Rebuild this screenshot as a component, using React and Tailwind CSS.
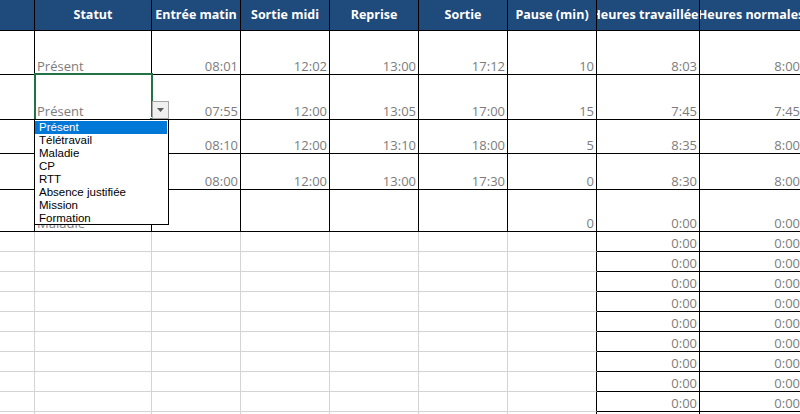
import React from 'react';

const widths = ['w-[35px]', 'w-[117px]', 'w-[89px]', 'w-[89px]', 'w-[89px]', 'w-[89px]', 'w-[89px]', 'w-[103px]', 'w-[103px]'];

const headers = ['', 'Statut', 'Entrée matin', 'Sortie midi', 'Reprise', 'Sortie', 'Pause (min)', 'Heures travaillées', 'Heures normales'];

const rows = [
  { h: 'h-[44px]', cells: ['', 'Présent', '08:01', '12:02', '13:00', '17:12', '10', '8:03', '8:00'] },
  { h: 'h-[45px]', cells: ['', 'Présent', '07:55', '12:00', '13:05', '17:00', '15', '7:45', '7:45'] },
  { h: 'h-[34px]', cells: ['', 'Télétravail', '08:10', '12:00', '13:10', '18:00', '5', '8:35', '8:00'] },
  { h: 'h-[36px]', cells: ['', 'Présent', '08:00', '12:00', '13:00', '17:30', '0', '8:30', '8:00'] },
  { h: 'h-[42px]', cells: ['', 'Maladie', '', '', '', '', '0', '0:00', '0:00'] },
];

const options = ['Présent', 'Télétravail', 'Maladie', 'CP', 'RTT', 'Absence justifiée', 'Mission', 'Formation'];

const dataFont = { fontFamily: '"Open Sans", "Liberation Sans", sans-serif' };

function Cell({ width, border, text, left }) {
  return (
    <div
      className={`${width} ${border} shrink-0 h-full flex items-end overflow-hidden whitespace-nowrap text-[13px] leading-[16px] text-[#7c7c7c] ${
        left ? 'justify-start pl-[2px]' : 'justify-end pr-[2px]'
      }`}
    >
      {text}
    </div>
  );
}

function App() {
  return (
    <div className="relative w-[800px] h-[414px] overflow-hidden bg-white" style={dataFont}>
      {/* header */}
      <div className="flex h-[31px]">
        {headers.map((title, i) => (
          <div
            key={i}
            className={`${widths[i]} shrink-0 h-full bg-[#1f4a7c] border-r border-b border-black flex items-center justify-center overflow-hidden whitespace-nowrap text-white font-bold text-[12.5px]`}
          >
            {title}
          </div>
        ))}
      </div>

      {/* filled rows */}
      {rows.map((row, r) => (
        <div key={r} className={`flex ${row.h}`}>
          {row.cells.map((text, i) => (
            <Cell key={i} width={widths[i]} border="border-r border-b border-black" text={text} left={i === 1} />
          ))}
        </div>
      ))}

      {/* empty rows */}
      {Array.from({ length: 10 }).map((_, r) => (
        <div key={r} className="flex h-[20px]">
          {widths.map((w, i) => {
            let border = 'border-r border-b border-[#d4d4d4]';
            if (i === 6) border = 'border-r border-b border-r-black border-b-[#d4d4d4]';
            if (i >= 7) border = 'border-r border-b border-black';
            return <Cell key={i} width={w} border={border} text={i >= 7 ? '0:00' : ''} />;
          })}
        </div>
      ))}

      {/* active cell */}
      <div className="absolute left-[34px] top-[73px] w-[119px] h-[48px] border-2 border-[#217346]" />
      <div className="absolute left-[149px] top-[117px] w-[5px] h-[5px] bg-[#217346] border border-white" />

      {/* dropdown button */}
      <div className="absolute left-[152px] top-[101px] w-[17px] h-[18px] bg-[#f0f0f0] border border-[#a6a6a6] flex items-center justify-center">
        <svg width="7" height="4" viewBox="0 0 7 4">
          <path d="M0 0 H7 L3.5 4 Z" fill="#5a5a5a" />
        </svg>
      </div>

      {/* dropdown list */}
      <div
        className="absolute left-[34px] top-[119px] w-[135px] h-[106px] bg-white border border-black pt-px"
        style={{ fontFamily: '"Liberation Sans", Arial, sans-serif' }}
      >
        {options.map((opt, i) => (
          <div
            key={opt}
            className={`h-[13px] leading-[13px] pl-[4px] text-[11.5px] mr-px ${i === 0 ? 'bg-[#0078d7] text-white' : 'text-black'}`}
          >
            {opt}
          </div>
        ))}
      </div>
    </div>
  );
}

export default App;
